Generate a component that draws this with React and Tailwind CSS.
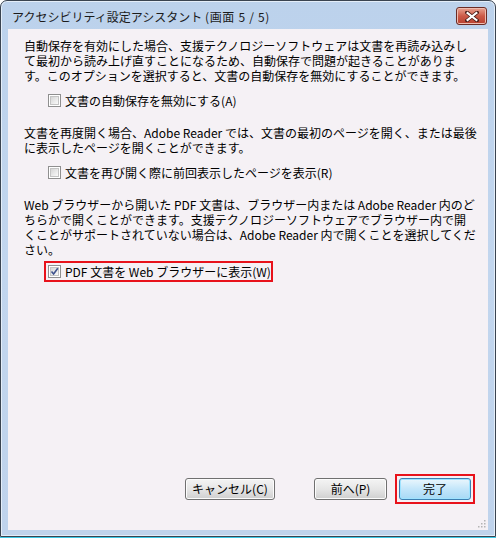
import React from "react";

const font = { fontFamily: '"Noto Sans CJK JP", "Noto Sans", sans-serif' };

const CheckBox = ({ checked }) => (
    <span className="inline-flex w-[13px] h-[13px] shrink-0 border border-[#8f8f8f] bg-white p-[1px]">
        <span className="relative flex-1 bg-gradient-to-br from-[#d6d6d6] to-[#fafafa] border border-[#c4c4c4]">
            {checked && (
                <svg viewBox="0 0 9 9" className="absolute -left-[1px] -top-[1px] w-[9px] h-[9px]">
                    <path d="M1.5 4.5 L3.6 7 L7.8 1.2" fill="none" stroke="#3e528d" strokeWidth="1.6" />
                </svg>
            )}
        </span>
    </span>
);

const Option = ({ label, checked }) => (
    <div className="flex items-center gap-[4px] h-[15px] whitespace-nowrap">
        <CheckBox checked={checked} />
        <span>{label}</span>
    </div>
);

const Button = ({ children, primary, width }) => (
    <button
        className={
            "h-[22px] rounded-[3px] border text-[12px] leading-none text-black flex items-center justify-center " +
            (primary
                ? "border-[#3c7fb1] bg-gradient-to-b from-[#eaf6fd] via-[#c3e6fa] to-[#a7d9f5] shadow-[inset_0_0_0_1px_#9fe3ff]"
                : "border-[#707070] bg-gradient-to-b from-[#f4f4f4] via-[#e6e6e6] to-[#cfcfcf] shadow-[inset_0_0_0_1px_#fcfcfc]")
        }
        style={{ width }}
    >
        {children}
    </button>
);

// one wrapped line of a paragraph, fixed to the dialog's 15px line pitch
const Line = ({ children }) => <div className="h-[15px] leading-[15px]">{children}</div>;

export default function App() {
    return (
        <div className="w-[496px] h-[538px] bg-white text-[12px] leading-[15px] text-black" style={font}>
            <div className="h-[537px] flex flex-col rounded-t-[7px] border border-[#3a4451] bg-gradient-to-b from-[#bcd2ec] via-[#c2d6ee] to-[#bfd3ec] shadow-[inset_0_0_0_1px_#e4eef9]">
                {/* title bar */}
                <div className="h-[28px] flex items-center justify-between pl-[11px] pr-[8px] shrink-0">
                    <span className="text-[#1b1b1b] pt-[2px] whitespace-nowrap">
                        アクセシビリティ設定アシスタント <span className="tracking-[0.7px]">(画面 5 / 5)</span>
                    </span>
                    <button className="w-[31px] h-[18px] mt-[2px] rounded-[3px] border border-[#6b2c26] bg-gradient-to-b from-[#e7a291] via-[#cc5a48] to-[#b8402f] shadow-[inset_0_0_0_1px_#eebcb0] flex items-center justify-center">
                        <svg viewBox="0 0 14 11" className="w-[14px] h-[11px]">
                            <path d="M2 1.5 L12 9.5 M12 1.5 L2 9.5" stroke="#4a1d19" strokeWidth="3.6" strokeLinecap="square" />
                            <path d="M2.6 2 L11.4 9 M11.4 2 L2.6 9" stroke="#ffffff" strokeWidth="2.2" strokeLinecap="square" />
                        </svg>
                    </button>
                </div>

                {/* client area */}
                <div className="relative flex-1 mx-[7px] mb-[6px] bg-[#f5f1f5] flex flex-col pl-[16px] pt-[9px] whitespace-nowrap">
                    <div>
                        <Line>自動保存を有効にした場合、支援テクノロジーソフトウェアは文書を再読み込みし</Line>
                        <Line>て最初から読み上げ直すことになるため、自動保存で問題が起きることがありま</Line>
                        <Line>す。このオプションを選択すると、文書の自動保存を無効にすることができます。</Line>
                    </div>
                    <div className="mt-[10px] ml-[24px]">
                        <Option label="文書の自動保存を無効にする(A)" />
                    </div>

                    <div className="mt-[17px]">
                        <Line>文書を再度開く場合、Adobe Reader では、文書の最初のページを開く、または最後</Line>
                        <Line>に表示したページを開くことができます。</Line>
                    </div>
                    <div className="mt-[10px] ml-[24px]">
                        <Option label="文書を再び開く際に前回表示したページを表示(R)" />
                    </div>

                    <div className="mt-[17px]">
                        <Line>Web ブラウザーから開いた PDF 文書は、ブラウザー内または Adobe Reader 内のど</Line>
                        <Line>ちらかで開くことができます。支援テクノロジーソフトウェアでブラウザー内で開</Line>
                        <Line>くことがサポートされていない場合は、Adobe Reader 内で開くことを選択してくだ</Line>
                        <Line>さい。</Line>
                    </div>
                    <div className="mt-[4px] ml-[20px] self-start w-[229px] h-[21px] border-2 border-[#e8121b] pl-[2px] flex items-center">
                        <Option label="PDF 文書を Web ブラウザーに表示(W)" checked />
                    </div>

                    <div className="flex-1" />

                    {/* buttons */}
                    <div className="flex items-center justify-end pr-[13px] pb-[26px]">
                        <Button width="90px">キャンセル(C)</Button>
                        <div className="ml-[39px]">
                            <Button width="73px">前へ(P)</Button>
                        </div>
                        <div className="ml-[8px] border-2 border-[#e8121b] p-[2px]">
                            <Button width="72px" primary>完了</Button>
                        </div>
                    </div>

                    {/* size grip */}
                    <svg viewBox="0 0 10 10" className="absolute right-[2px] bottom-[2px] w-[10px] h-[10px]">
                        {[[8, 2], [5, 5], [8, 5], [2, 8], [5, 8], [8, 8]].map(([x, y]) => (
                            <rect key={x + "-" + y} x={x} y={y} width="1.5" height="1.5" fill="#b4b4b4" />
                        ))}
                    </svg>
                </div>
            </div>
            <div className="h-[1px] bg-[#3cc8e6]" />
        </div>
    );
}
